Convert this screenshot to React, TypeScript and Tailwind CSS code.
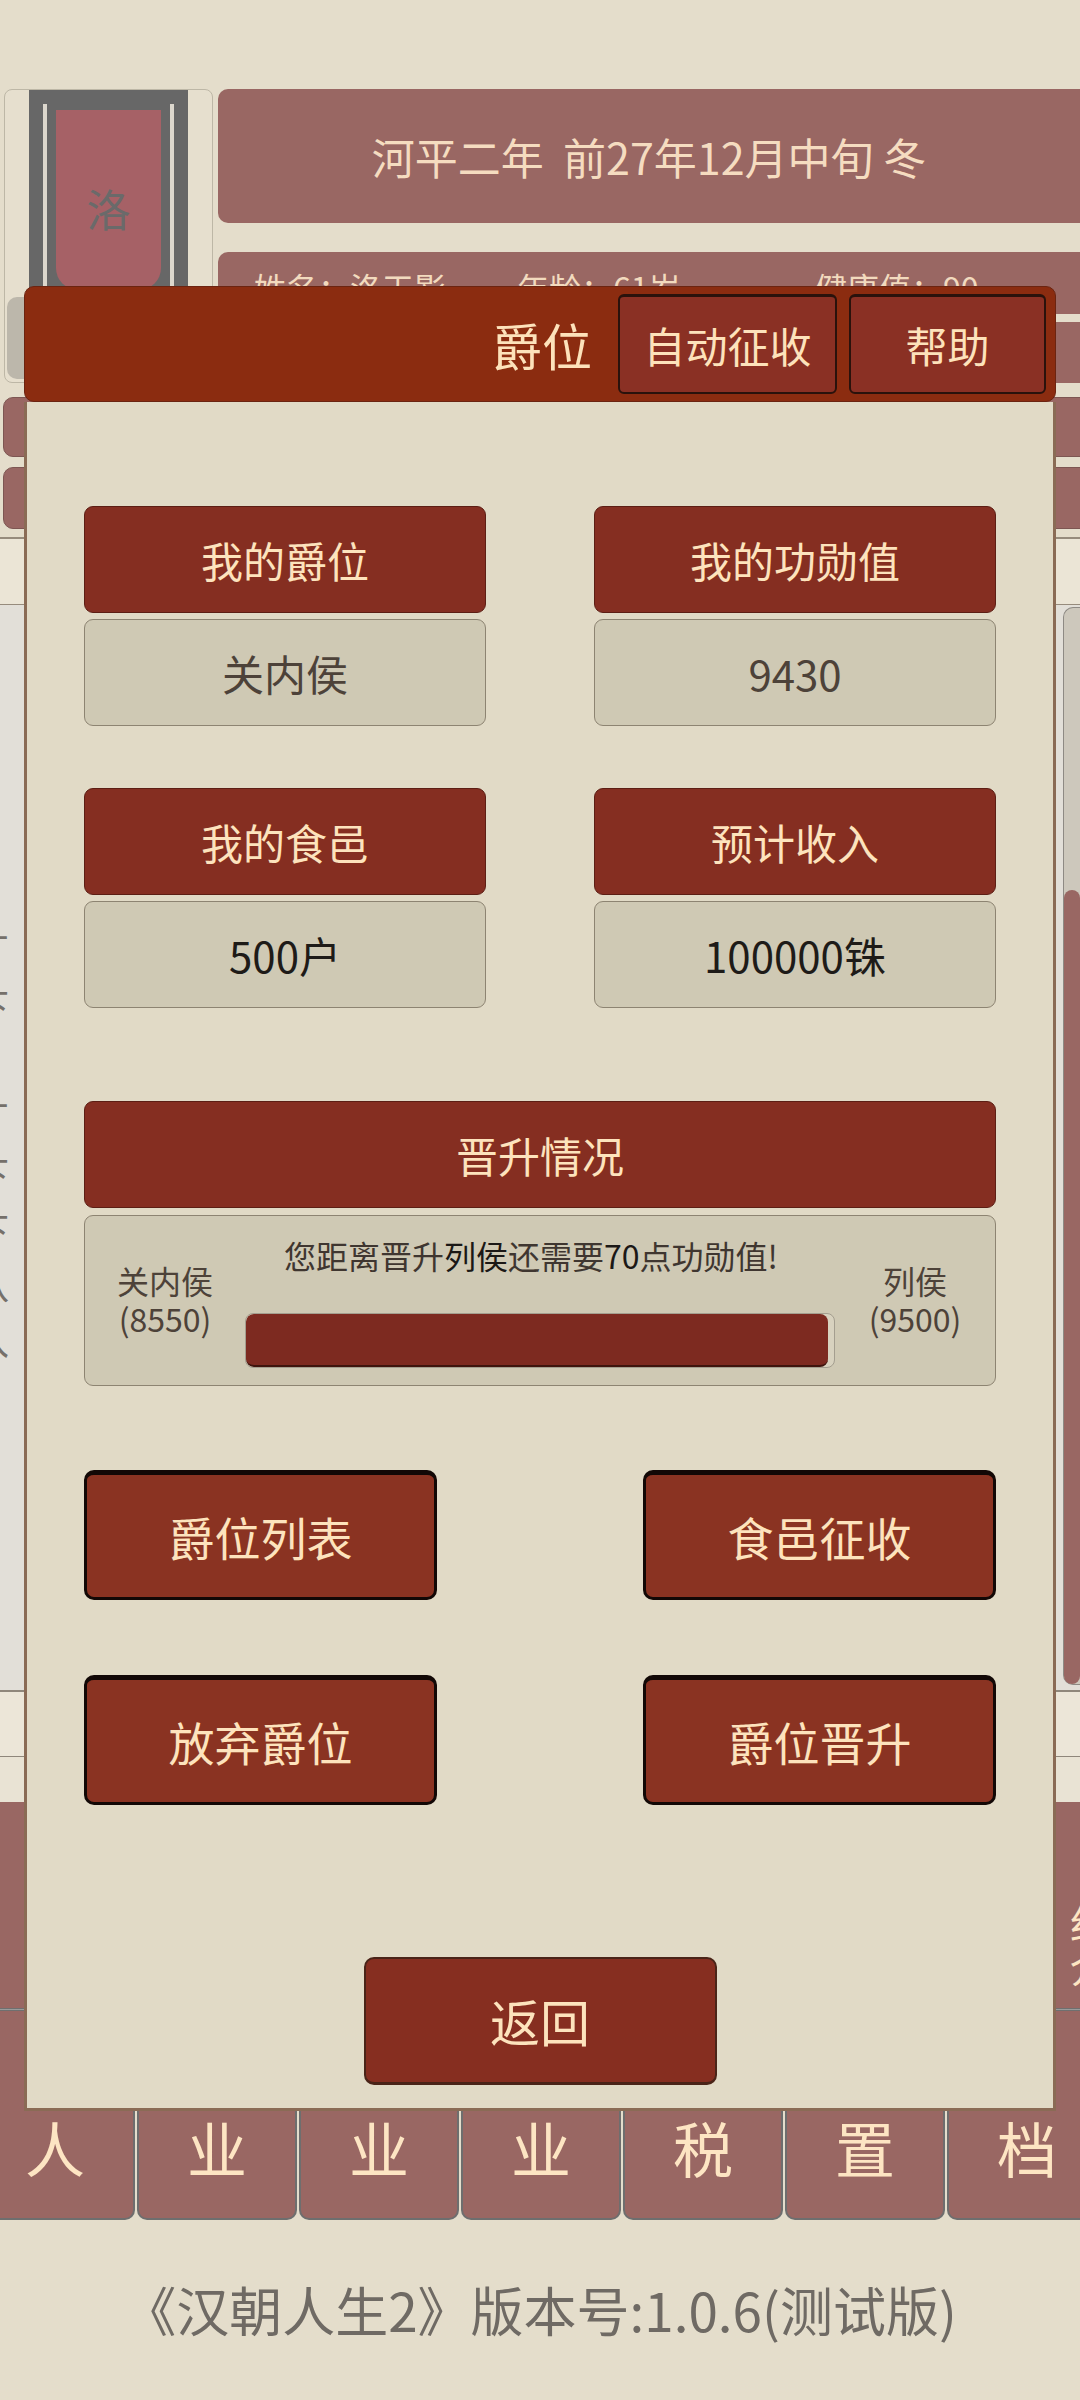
import React from "react";

function AvatarCard() {
  return (
    <div className="ml-[4px] w-[209px] h-[294px] shrink-0 rounded-[8px] border border-[#bdb7a6] bg-[#e6dfce] flex flex-col overflow-hidden">
      <div className="ml-[24px] w-[159px] h-[200px] shrink-0 bg-[#676767] px-[14px] pt-[14px]">
        <div className="h-full border-x-[4px] border-[#dcd7cd] px-[9px] pt-[6px]">
          <div className="h-full bg-[#a66166] rounded-b-[22px] flex justify-center pt-[76px]">
            <span className="text-[44px] leading-none text-[#6a6a6a]">洛</span>
          </div>
        </div>
      </div>
      <div className="mt-auto mb-[3px] mx-[2px] h-[82px] rounded-[10px] bg-[#bcb7ab]" />
    </div>
  );
}

function InfoCell({ label, value, dark }: { label: string; value: string; dark?: boolean }) {
  return (
    <div className="flex flex-col gap-[6px]">
      <div className="h-[107px] rounded-[9px] bg-[#852e21] border border-[#5c1e14] flex items-center justify-center text-[42px] text-[#fde3bd]">
        {label}
      </div>
      <div
        className={
          dark
            ? "h-[107px] rounded-[9px] bg-[#cfc9b4] border border-[#8d8472] flex items-center justify-center text-[42px] text-[#1e1b18]"
            : "h-[107px] rounded-[9px] bg-[#cfc9b4] border border-[#8d8472] flex items-center justify-center text-[42px] text-[#4d4239]"
        }
      >
        {value}
      </div>
    </div>
  );
}

function ActionBtn({ children }: { children: React.ReactNode }) {
  return (
    <div className="w-[353px] h-[130px] rounded-[10px] bg-[#8a3322] border-[3px] border-t-[5px] border-[#120806] flex items-center justify-center text-[46px] text-[#fde3bd]">
      {children}
    </div>
  );
}

export default function App() {
  const tabs = ["人", "业", "业", "业", "税", "置", "档"];
  const sideChars = ["丁", "下", "(", "丁", "下", "下", "八", "入"];
  return (
    <div className="relative w-[1080px] h-[2400px] overflow-hidden bg-[#e4ddcb] font-['Noto_Sans_CJK_SC','Noto_Sans',sans-serif]">
      {/* background page */}
      <div className="flex flex-col pt-[89px]">
        <div className="flex">
          <AvatarCard />
          <div className="ml-[5px] flex-1 flex flex-col">
            <div className="h-[134px] bg-[#996763] rounded-l-[10px] flex items-center justify-center text-[43px] text-[#f5dcc0] whitespace-pre">
              河平二年  前27年12月中旬 冬
            </div>
            <div className="mt-[29px] h-[62px] bg-[#996763] rounded-l-[10px] flex items-center pt-[8px] text-[32px] text-[#f2dabe]">
              <span className="ml-[36px] w-[263px]">姓名：洛天影</span>
              <span className="w-[298px]">年龄：61岁</span>
              <span>健康值：90</span>
            </div>
            <div className="mt-[8px] h-[61px] bg-[#996763] rounded-l-[10px]" />
          </div>
        </div>

        <div className="mt-[14px] flex gap-[8px] pl-[3px] h-[60px]">
          <div className="flex-1 rounded-[10px] bg-[#996763] border border-[#7d5652]" />
          <div className="flex-1 rounded-[10px] bg-[#996763] border border-[#7d5652]" />
          <div className="flex-1 rounded-[10px] bg-[#996763] border border-[#7d5652]" />
          <div className="flex-1 rounded-l-[10px] bg-[#996763] border border-r-0 border-[#7d5652]" />
        </div>
        <div className="mt-[10px] flex gap-[8px] pl-[3px] h-[62px]">
          <div className="flex-1 rounded-[10px] bg-[#996763] border border-[#7d5652]" />
          <div className="flex-1 rounded-[10px] bg-[#996763] border border-[#7d5652]" />
          <div className="flex-1 rounded-[10px] bg-[#996763] border border-[#7d5652]" />
          <div className="flex-1 rounded-l-[10px] bg-[#996763] border border-r-0 border-[#7d5652]" />
        </div>

        <div className="mt-[8px] h-[68px] bg-[#ebe5d6] border-t-2 border-b border-[#968b7c]" />

        <div className="h-[1085px] flex bg-[#e2dfd8]">
          <div className="flex-1">
            <div className="-ml-[27px] pt-[315px] flex flex-col text-[36px] leading-[56px] text-[#75706a]">
              {sideChars.map((c, i) => (
                <span key={i}>{c}</span>
              ))}
            </div>
          </div>
          <div className="w-[17px] mt-[2px] mb-[5px] rounded-l-[10px] border border-r-0 border-[#8e8a84] bg-[#cdc8bc] flex flex-col pt-[282px]">
            <div className="flex-1 bg-[#996763] rounded-[8px]" />
          </div>
        </div>

        <div className="h-[67px] bg-[#ece6d8] border-t-2 border-b border-[#8f877b]" />
        <div className="h-[45px] bg-[#e9e3d4]" />
        <div className="h-[206px] bg-[#996763] flex justify-end">
          <div className="-mr-[30px] pt-[98px] flex flex-col text-[40px] leading-[44px] text-[#fde5c3]">
            <span>纪</span>
            <span>介</span>
          </div>
        </div>
        <div className="h-[3px] border-y border-[#6f6f6f] bg-[#9a9a9a]" />
        <div className="flex gap-[2px] -ml-[25px]">
          {tabs.map((c, i) => (
            <div
              key={i}
              className="w-[160px] shrink-0 h-[209px] bg-[#996763] border-2 border-t-0 border-[#6e6e6e] rounded-b-[10px] flex justify-center pt-[106px] text-[60px] leading-none text-[#fde5c3]"
            >
              {c}
            </div>
          ))}
        </div>
        <div className="mt-[50px] text-center text-[53px] leading-[78px] text-[#6f6a64]">
          《汉朝人生2》版本号:1.0.6(测试版)
        </div>
      </div>

      {/* modal */}
      <div className="absolute left-[24px] top-[286px] w-[1032px] h-[1825px] flex flex-col">
        <div className="h-[116px] shrink-0 rounded-[10px] bg-[#8b2c10] border border-[#6b2411] flex items-center justify-end pr-[9px]">
          <span className="mr-[26px] text-[50px] leading-none text-[#fde2bb]">爵位</span>
          <div className="w-[219px] h-[100px] rounded-[6px] bg-[#8a3024] border-2 border-t-[3px] border-[#2a120c] flex items-center justify-center text-[42px] text-[#fde2bb]">
            自动征收
          </div>
          <div className="ml-[12px] w-[197px] h-[100px] rounded-[6px] bg-[#8a3024] border-2 border-t-[3px] border-[#2a120c] flex items-center justify-center text-[42px] text-[#fde2bb]">
            帮助
          </div>
        </div>

        <div className="flex-1 bg-[#e1dac6] border-x-[3px] border-b-[3px] border-[#8a6b55] px-[57px] pt-[104px] flex flex-col">
          <div className="grid grid-cols-2 gap-x-[108px]">
            <InfoCell label="我的爵位" value="关内侯" />
            <InfoCell label="我的功勋值" value="9430" />
          </div>
          <div className="mt-[62px] grid grid-cols-2 gap-x-[108px]">
            <InfoCell label="我的食邑" value="500户" dark />
            <InfoCell label="预计收入" value="100000铢" dark />
          </div>

          <div className="mt-[93px] h-[107px] rounded-[9px] bg-[#852e21] border border-[#5c1e14] flex items-center justify-center text-[42px] text-[#fde3bd]">
            晋升情况
          </div>
          <div className="mt-[7px] h-[171px] rounded-[9px] bg-[#cfc9b4] border border-[#8d8472] flex">
            <div className="w-[160px] shrink-0 flex flex-col items-center justify-center pb-[4px] text-[32px] leading-[38px] text-[#4d4239]">
              <span>关内侯</span>
              <span>(8550)</span>
            </div>
            <div className="flex-1 flex flex-col pt-[15px]">
              <div className="text-center pr-[18px] text-[32px] leading-[48px] text-[#3f3630]">
                您距离晋升<span className="text-[#1b1816]">列侯</span>还需要<span className="text-[#1b1816]">70</span>点功勋值!
              </div>
              <div className="mt-[34px] h-[55px] rounded-[8px] border border-[#a49e8f] bg-[#d8d2bf] overflow-hidden">
                <div className="w-[99%] h-full rounded-[8px] bg-[#7d2a20] border-b-2 border-[#3e140d]" />
              </div>
            </div>
            <div className="w-[160px] shrink-0 flex flex-col items-center justify-center pb-[4px] text-[32px] leading-[38px] text-[#4d4239]">
              <span>列侯</span>
              <span>(9500)</span>
            </div>
          </div>

          <div className="mt-[84px] flex justify-between">
            <ActionBtn>爵位列表</ActionBtn>
            <ActionBtn>食邑征收</ActionBtn>
          </div>
          <div className="mt-[75px] flex justify-between">
            <ActionBtn>放弃爵位</ActionBtn>
            <ActionBtn>爵位晋升</ActionBtn>
          </div>

          <div className="mt-[152px] flex justify-center">
            <div className="w-[353px] h-[128px] rounded-[10px] bg-[#862e20] border-2 border-b-[3px] border-[#4a2418] flex items-center justify-center text-[50px] text-[#fde3bd]">
              返回
            </div>
          </div>
        </div>
      </div>
    </div>
  );
}
